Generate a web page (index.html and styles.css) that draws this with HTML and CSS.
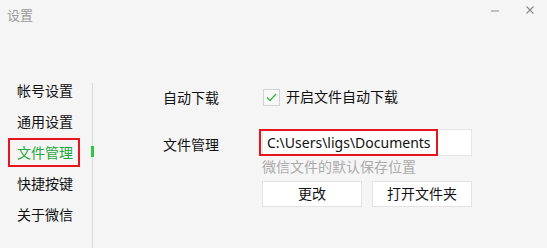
FILE: index.html
```html
<!DOCTYPE html>
<html lang="zh-CN">
<head>
<meta charset="utf-8">
<title>设置</title>
<link rel="stylesheet" href="styles.css">
</head>
<body>
<div class="window">
  <div class="titlebar">
    <span class="title">设置</span>
    <span class="spacer"></span>
    <span class="btn-min"></span>
    <svg class="btn-close" width="8" height="8" viewBox="0 0 8 8"><path d="M0.5 0.5 L7.5 7.5 M7.5 0.5 L0.5 7.5" stroke="#8a8a8a" stroke-width="1.1" fill="none"/></svg>
  </div>
  <div class="main">
    <nav class="nav">
      <div class="nav-item">帐号设置</div>
      <div class="nav-item">通用设置</div>
      <div class="nav-item active">文件管理</div>
      <div class="nav-item">快捷按键</div>
      <div class="nav-item">关于微信</div>
    </nav>
    <div class="divider"><span class="indicator"></span></div>
    <section class="panel">
      <div class="label row1">自动下载</div>
      <div class="value row1">
        <span class="checkbox"><svg width="15" height="15" viewBox="0 0 15 15"><path d="M3 7.5 L6 10.5 L12 4" stroke="#3cb34a" stroke-width="1.3" fill="none"/></svg></span>
        <span class="check-text">开启文件自动下载</span>
      </div>
      <div class="label row2">文件管理</div>
      <div class="value row2">
        <div class="input"><span class="path">C:\Users\ligs\Documents</span></div>
      </div>
      <div class="value hint">微信文件的默认保存位置</div>
      <div class="value buttons">
        <span class="button">更改</span>
        <span class="button">打开文件夹</span>
      </div>
    </section>
  </div>
</div>
</body>
</html>
```
FILE: styles.css
```css
html, body {
  margin: 0;
  padding: 0;
  background: #f5f5f5;
}
body {
  font-family: "Noto Sans", "Noto Sans CJK SC", sans-serif;
  font-size: 14px;
  color: #111;
}
.window {
  width: 547px;
  height: 248px;
  overflow: hidden;
}
.titlebar {
  height: 30px;
  display: flex;
  align-items: center;
  padding-left: 7px;
}
.title {
  font-size: 13px;
  color: #9a9a9a;
  line-height: 30px;
  margin-top: 0px;
}
.spacer { flex: 1; }
.btn-min {
  width: 8px;
  height: 2px;
  background: #c0c0c0;
  margin-right: 27px;
  margin-top: -8px;
}
.btn-close {
  margin-right: 13px;
  margin-top: -10px;
}
.main {
  display: flex;
  height: 218px;
  padding-top: 46px;
  box-sizing: border-box;
}
.nav {
  width: 84px;
  padding-left: 8px;
}
.nav-item {
  width: 72px;
  box-sizing: border-box;
  height: 29px;
  line-height: 25px;
  margin-bottom: 2px;
  padding-left: 7px;
  border: 2px solid transparent;
  white-space: nowrap;
}
.nav-item.active {
  border-color: #e8141e;
  color: #1fa83a;
}
.divider {
  width: 1px;
  background: #dcdcdc;
  margin-top: 7px;
  margin-bottom: -30px;
  position: relative;
}
.indicator {
  position: absolute;
  left: -1px;
  top: 63px;
  width: 3px;
  height: 11px;
  background: #2ec843;
}
.panel {
  display: grid;
  grid-template-columns: 99px 210px;
  padding: 12px 0 0 70px;
  align-content: start;
}
.label {
  grid-column: 1;
  white-space: nowrap;
}
.value { grid-column: 2; }
.row1 {
  height: 18px;
  line-height: 18px;
  display: flex;
  align-items: center;
}
.label.row1 { margin-top: 1px; }
.row2 {
  margin-top: 22px;
  height: 27px;
  display: flex;
  align-items: center;
}
.label.row2 { margin-top: 23px; }
.checkbox {
  width: 17px;
  height: 17px;
  box-sizing: border-box;
  border: 1px solid #d2d2d2;
  background: #f7f7f7;
  margin-left: 1px;
  display: flex;
  align-items: center;
  justify-content: center;
}
.check-text {
  margin-left: 6px;
  white-space: nowrap;
}
.input {
  width: 210px;
  height: 27px;
  box-sizing: border-box;
  background: #fff;
  border: 1px solid #e6e6e6;
  display: flex;
}
.path {
  margin: -1px 0 -1px -4px;
  height: 27px;
  box-sizing: border-box;
  border: 2px solid #e8141e;
  padding: 0 5px 0 6px;
  line-height: 23px;
  white-space: nowrap;
  color: #111;
}
.hint {
  color: #ababab;
  line-height: 19px;
  white-space: nowrap;
}
.buttons {
  margin-top: 5px;
  display: flex;
  gap: 10px;
}
.button {
  width: 100px;
  height: 26px;
  box-sizing: border-box;
  background: #fff;
  border: 1px solid #e3e3e3;
  text-align: center;
  line-height: 24px;
  white-space: nowrap;
}
```
